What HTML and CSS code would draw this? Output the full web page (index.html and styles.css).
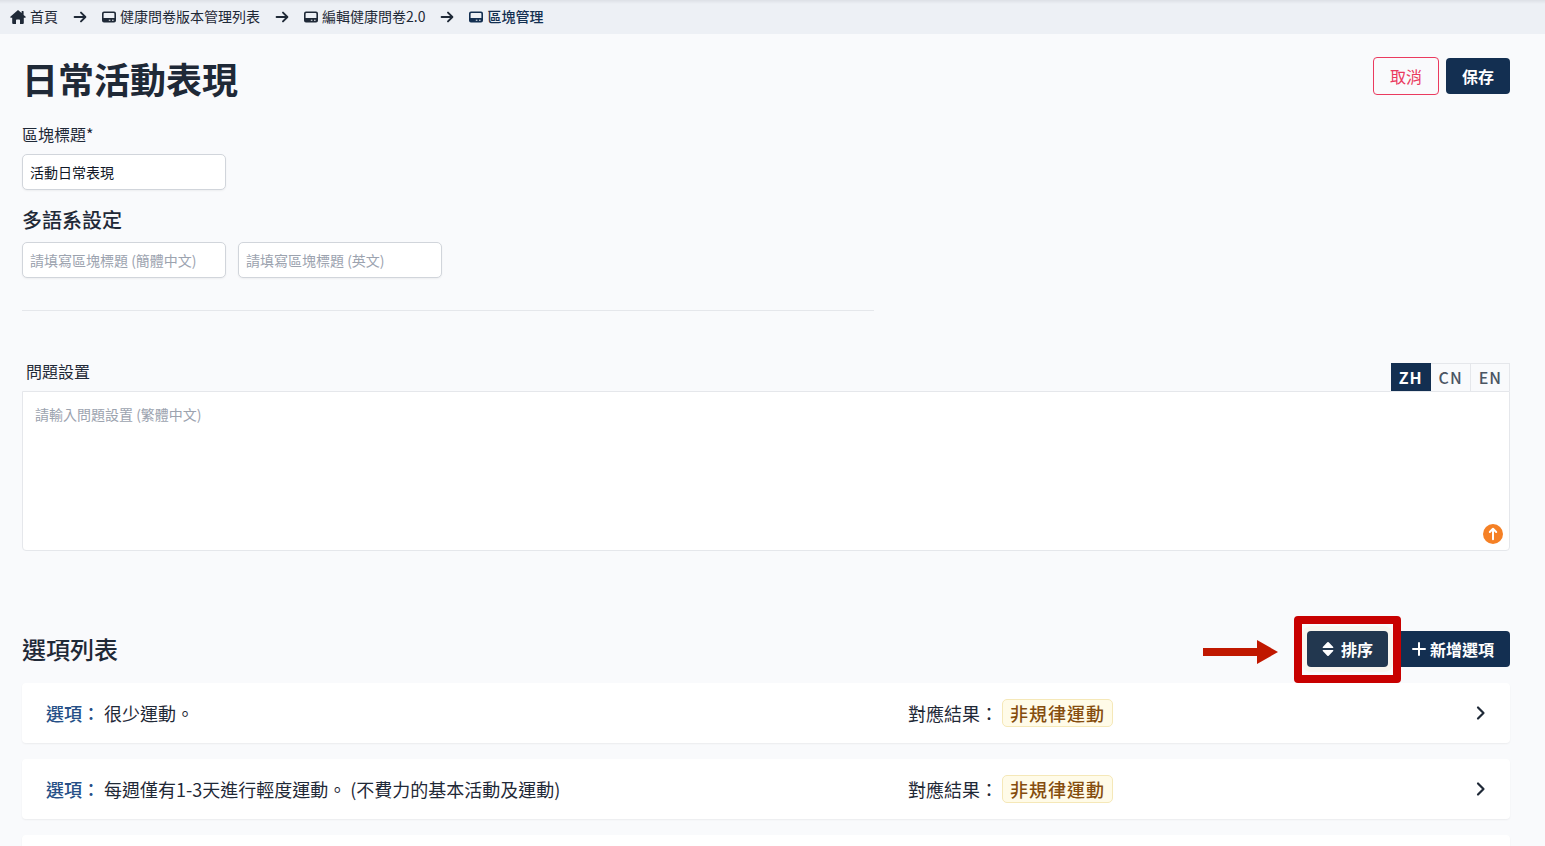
FILE: index.html
```html
<!DOCTYPE html>
<html lang="zh-Hant">
<head>
    <meta charset="UTF-8">
    <meta name="viewport" content="width=device-width, initial-scale=1.0">
    <title>區塊管理</title>
    <link rel="stylesheet" href="styles.css">
</head>
<body>

    <!-- icons -->
    <svg class="icon-defs" aria-hidden="true">
        <symbol id="icon-home" viewBox="0 0 16 14">
            <path d="M8 0 L0.3 6.8 Q0 7.6 0.9 7.8 H2.2 V13 Q2.2 14 3.2 14 H6 V10.3 Q6 9.5 6.8 9.5 H9.2 Q10 9.5 10 10.3 V14 H12.8 Q13.8 14 13.8 13 V7.8 H15.1 Q16 7.6 15.7 6.8 L13.6 5 V1.4 Q13.6 1 13.2 1 H12 Q11.6 1 11.6 1.4 V3.1 Z"/>
        </symbol>
        <symbol id="icon-arrow" viewBox="0 0 14 12">
            <path d="M1.6 6 H12.2 M8 1.6 L12.4 6 L8 10.4" fill="none" stroke="currentColor" stroke-width="1.9" stroke-linecap="round" stroke-linejoin="round"/>
        </symbol>
        <symbol id="icon-card" viewBox="0 0 14 12">
            <path fill-rule="evenodd" d="M2 0.5 H12 Q14 0.5 14 2.5 V9.5 Q14 11.5 12 11.5 H2 Q0 11.5 0 9.5 V2.5 Q0 0.5 2 0.5 Z M2.4 2 Q1.6 2 1.6 2.8 V7 H12.4 V2.8 Q12.4 2 11.6 2 Z M6.8 8.7 V9.8 H8.4 V8.7 Z M10 8.7 V9.8 H11.6 V8.7 Z"/>
        </symbol>
        <symbol id="icon-chevron" viewBox="0 0 10 14">
            <path d="M2 1.5 L7.5 7 L2 12.5" fill="none" stroke="currentColor" stroke-width="2.2" stroke-linecap="round" stroke-linejoin="round"/>
        </symbol>
        <symbol id="icon-sort" viewBox="0 0 12 16">
            <path d="M1.2 7 Q0.2 6.8 0.8 5.9 L5.3 1.2 Q6 0.7 6.7 1.2 L11.2 5.9 Q11.8 6.8 10.8 7 Z M1.2 9 Q0.2 9.2 0.8 10.1 L5.3 14.8 Q6 15.3 6.7 14.8 L11.2 10.1 Q11.8 9.2 10.8 9 Z"/>
        </symbol>
        <symbol id="icon-plus" viewBox="0 0 14 14">
            <path d="M7 1 V13 M1 7 H13" fill="none" stroke="currentColor" stroke-width="2" stroke-linecap="round"/>
        </symbol>
        <symbol id="icon-up" viewBox="0 0 20 20">
            <circle cx="10" cy="10" r="10"/>
            <path d="M10 15.2 V5.2 M6.8 8 L10 4.8 L13.2 8" fill="none" stroke="#fff" stroke-width="2" stroke-linecap="round" stroke-linejoin="round"/>
        </symbol>
    </svg>

    <nav class="breadcrumb">
        <a href="#"><svg class="icon-home"><use href="#icon-home"/></svg>首頁</a>
        <svg class="icon-arrow"><use href="#icon-arrow"/></svg>
        <a href="#"><svg class="icon-card"><use href="#icon-card"/></svg>健康問卷版本管理列表</a>
        <svg class="icon-arrow"><use href="#icon-arrow"/></svg>
        <a href="#"><svg class="icon-card"><use href="#icon-card"/></svg>編輯健康問卷2.0</a>
        <svg class="icon-arrow"><use href="#icon-arrow"/></svg>
        <a href="#" class="current"><svg class="icon-card"><use href="#icon-card"/></svg>區塊管理</a>
    </nav>

    <main class="page">
        <header class="page-header">
            <h1>日常活動表現</h1>
            <div class="actions">
                <button type="button" class="btn btn-cancel">取消</button>
                <button type="button" class="btn">保存</button>
            </div>
        </header>

        <!-- block title -->
        <section class="block-title">
            <label for="title">區塊標題*</label>
            <input type="text" id="title" value="活動日常表現">

            <h3>多語系設定</h3>
            <div class="lang-inputs">
                <input type="text" aria-label="簡體中文" placeholder="請填寫區塊標題 (簡體中文)">
                <input type="text" aria-label="英文" placeholder="請填寫區塊標題 (英文)">
            </div>
        </section>

        <!-- question -->
        <section class="question">
            <div class="question-bar">
                <label for="question">問題設置</label>
                <div class="tabs">
                    <button type="button" class="tab active">ZH</button>
                    <button type="button" class="tab">CN</button>
                    <button type="button" class="tab">EN</button>
                </div>
            </div>
            <div class="question-box">
                <textarea id="question" placeholder="請輸入問題設置 (繁體中文)"></textarea>
                <button type="button" class="upload" aria-label="上傳"><svg><use href="#icon-up"/></svg></button>
            </div>
        </section>

        <!-- options -->
        <section class="options">
            <div class="options-bar">
                <h2>選項列表</h2>
                <div class="actions">
                    <div class="highlight">
                        <svg class="pointer" viewBox="0 0 75 24"><path d="M0 8 H54 V0 L75 12 L54 24 V16 H0 Z"/></svg>
                        <button type="button" class="btn btn-sort"><svg class="icon-sort"><use href="#icon-sort"/></svg>排序</button>
                    </div>
                    <button type="button" class="btn btn-add"><svg class="icon-plus"><use href="#icon-plus"/></svg>新增選項</button>
                </div>
            </div>

            <div class="card">
                <p><span class="key">選項：</span> 很少運動。</p>
                <p>對應結果： <span class="badge">非規律運動</span></p>
                <svg class="icon-chevron"><use href="#icon-chevron"/></svg>
            </div>
            <div class="card">
                <p><span class="key">選項：</span> 每週僅有1-3天進行輕度運動。 (不費力的基本活動及運動)</p>
                <p>對應結果： <span class="badge">非規律運動</span></p>
                <svg class="icon-chevron"><use href="#icon-chevron"/></svg>
            </div>
            <div class="card"></div>
        </section>
    </main>

</body>
</html>
```

FILE: styles.css
```css
* {
    box-sizing: border-box;
}

body {
    margin: 0;
    height: 100vh;
    overflow: hidden;
    background-color: #f9fafc;
    color: #1f2937;
    font-family: "Noto Sans CJK TC", "Noto Sans", sans-serif;
    font-size: 16px;
    line-height: 24px;
}

h1, h2, h3, p {
    margin: 0;
}

svg {
    display: block;
    flex: none;
    fill: currentColor;
}

.icon-defs {
    position: absolute;
    width: 0;
    height: 0;
}

input, textarea, button {
    font-family: inherit;
}

/* breadcrumb */
.breadcrumb {
    display: flex;
    align-items: center;
    gap: 15px;
    height: 34px;
    padding: 0 10px;
    background: linear-gradient(#dde0e6, #edf0f5 4px);
    font-size: 14px;
    line-height: 22px;
}

.breadcrumb a {
    display: flex;
    align-items: center;
    gap: 4px;
    padding-bottom: 2px;
    color: #1f2937;
    text-decoration: none;
}

.breadcrumb a svg {
    margin-top: 2px;
}

.breadcrumb .current {
    color: #132f51;
    font-weight: 500;
}

.icon-home {
    width: 16px;
    height: 14px;
}

.icon-arrow {
    width: 14px;
    height: 12px;
}

.icon-card {
    width: 14px;
    height: 12px;
}

/* page */
.page {
    padding: 23px 35px 0 22px;
}

.page-header {
    display: flex;
    justify-content: space-between;
    align-items: flex-start;
    height: 65px;
}

h1 {
    font-size: 36px;
    line-height: 42px;
    font-weight: 700;
}

.actions {
    display: flex;
    align-items: center;
    gap: 7px;
}

.btn {
    display: flex;
    align-items: center;
    height: 36px;
    padding: 0 16px;
    border: none;
    border-radius: 4px;
    background-color: #132f51;
    color: white;
    font-size: 16px;
    font-weight: 700;
    cursor: pointer;
}

.btn-cancel {
    height: 38px;
    border: 1px solid #ea3a5f;
    background-color: transparent;
    color: #ea3a5f;
    font-weight: 400;
}

/* block title */
.block-title {
    width: 852px;
    max-width: 100%;
    padding-bottom: 32px;
    border-bottom: 1px solid #e5e7eb;
}

.block-title label {
    display: block;
    margin-bottom: 8px;
}

input {
    display: block;
    width: 204px;
    height: 36px;
    padding: 0 7px;
    border: 1px solid #d1d5db;
    border-radius: 5px;
    background-color: white;
    box-shadow: 0 1px 2px rgba(0, 0, 0, 0.05);
    color: #111827;
    font-size: 14px;
}

input::placeholder,
textarea::placeholder {
    color: #9ca3af;
}

h3 {
    margin: 16px 0 8px;
    font-size: 20px;
    line-height: 28px;
    font-weight: 500;
}

.lang-inputs {
    display: flex;
    gap: 12px;
}

/* question */
.question {
    margin-top: 48px;
}

.question-bar {
    display: flex;
    justify-content: space-between;
    align-items: flex-end;
    height: 32px;
    padding-left: 4px;
}

.question-bar label {
    margin-bottom: 8px;
}

.tabs {
    display: flex;
}

.tab {
    height: 28px;
    padding: 0 7px 2px 8px;
    border: 1px solid #e5e7eb;
    border-bottom: none;
    border-left: none;
    background-color: transparent;
    color: #4b5563;
    font-size: 16px;
    font-weight: 500;
    letter-spacing: 1px;
}

.tab.active {
    border-color: #132f51;
    background-color: #132f51;
    color: white;
    font-weight: 700;
}

.question-box {
    position: relative;
}

textarea {
    display: block;
    width: 100%;
    height: 160px;
    padding: 12px;
    border: 1px solid #e5e7eb;
    border-radius: 0 0 4px 4px;
    background-color: white;
    font-size: 14px;
    resize: none;
}

.upload {
    position: absolute;
    right: 7px;
    bottom: 7px;
    width: 20px;
    height: 20px;
    padding: 0;
    border: none;
    background: none;
    color: #f58025;
}

.upload svg {
    width: 20px;
    height: 20px;
}

/* options */
.options {
    margin-top: 80px;
}

.options-bar {
    display: flex;
    justify-content: space-between;
    align-items: center;
    height: 36px;
    margin-bottom: 16px;
}

.options-bar .actions {
    gap: 8px;
}

h2 {
    font-size: 24px;
    line-height: 32px;
    font-weight: 500;
}

.highlight {
    position: relative;
}

/* red frame round the sort button */
.highlight::before {
    content: "";
    position: absolute;
    inset: -15px -13px -16px;
    z-index: 1;
    border: 8px solid #c80000;
    border-radius: 4px;
}

.pointer {
    position: absolute;
    top: 9px;
    right: 110px;
    width: 75px;
    height: 24px;
    color: #c01800;
}

.btn-sort {
    gap: 7px;
    padding: 0 15px;
    background-color: #22374f;
    box-shadow: 0 0 0 5px #f8f5ef;
}

.btn-add {
    gap: 4px;
}

.icon-sort {
    width: 12px;
    height: 16px;
}

.icon-plus {
    width: 14px;
    height: 14px;
}

.card {
    display: grid;
    grid-template-columns: 3fr 2fr 10px;
    align-items: center;
    min-height: 60px;
    margin-bottom: 16px;
    padding: 0 24px;
    border-radius: 4px;
    background-color: white;
    box-shadow: 0 1px 2px rgba(0, 0, 0, 0.06);
    font-size: 18px;
    line-height: 28px;
}

.card p + p {
    padding-left: 4px;
}

.key {
    color: #265087;
    font-weight: 500;
}

.badge {
    display: inline-block;
    height: 28px;
    padding: 0 7px;
    border: 1px solid #f5e8b8;
    border-radius: 5px;
    background-color: #fffbe8;
    color: #854d0e;
    font-weight: 500;
    line-height: 26px;
    letter-spacing: 1px;
}

.icon-chevron {
    width: 10px;
    height: 16px;
}
```
